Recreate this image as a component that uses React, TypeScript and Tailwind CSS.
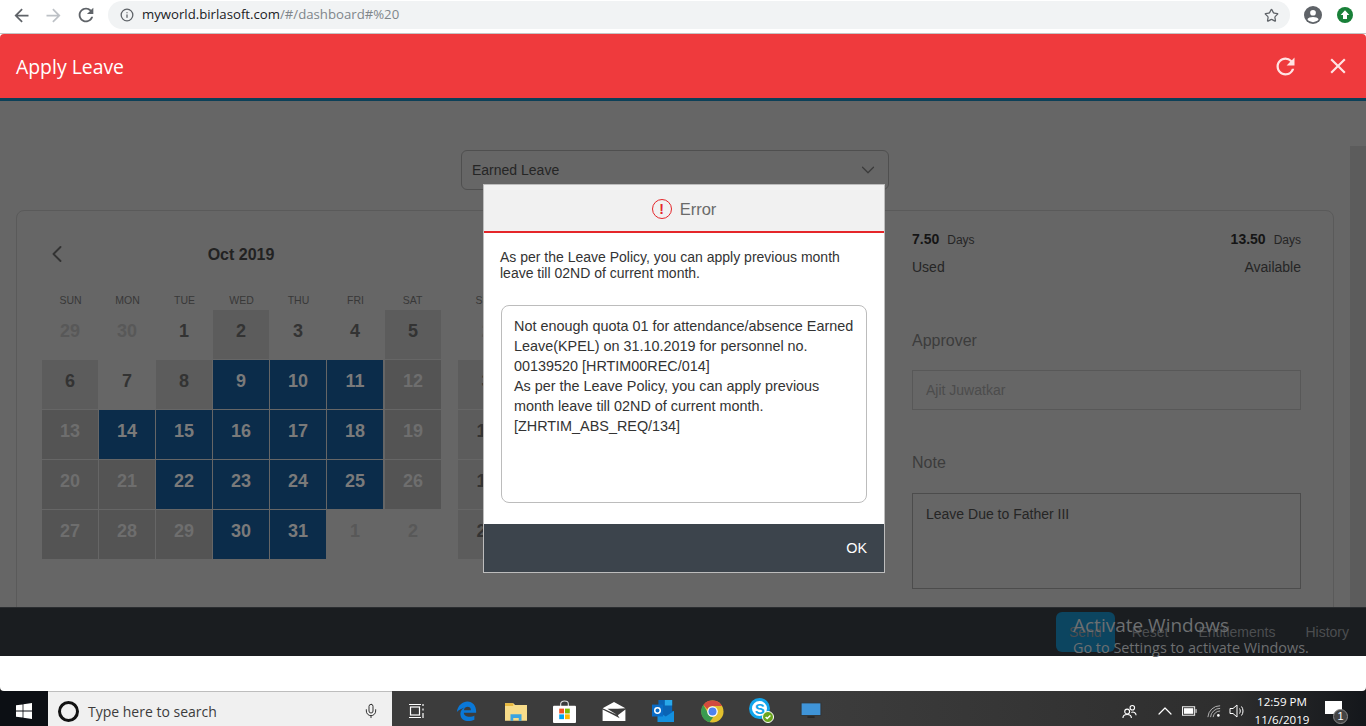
import { Info, Star, ChevronDown, ChevronLeft, Mic, ChevronUp } from "lucide-react";

type Cell = { n: number; bg?: string; fg: string };

const DARK = "text-[#333333]";
const DIM = "text-[#7a7a7a]";
const FADE = "text-[#6e6e6e]";
const OUT = "text-[#585858]";
const BLUE = "bg-[#0b2c4a]";
const MID = "bg-[#5c5c5c]";
const DEEP = "bg-[#545454]";

const weeks: Cell[][] = [
  [
    { n: 29, fg: OUT },
    { n: 30, fg: OUT },
    { n: 1, fg: DARK },
    { n: 2, bg: MID, fg: DARK },
    { n: 3, fg: DARK },
    { n: 4, fg: DARK },
    { n: 5, bg: MID, fg: DARK },
  ],
  [
    { n: 6, bg: MID, fg: DARK },
    { n: 7, fg: DARK },
    { n: 8, bg: MID, fg: DARK },
    { n: 9, bg: BLUE, fg: DIM },
    { n: 10, bg: BLUE, fg: DIM },
    { n: 11, bg: BLUE, fg: DIM },
    { n: 12, bg: DEEP, fg: FADE },
  ],
  [
    { n: 13, bg: DEEP, fg: FADE },
    { n: 14, bg: BLUE, fg: DIM },
    { n: 15, bg: BLUE, fg: DIM },
    { n: 16, bg: BLUE, fg: DIM },
    { n: 17, bg: BLUE, fg: DIM },
    { n: 18, bg: BLUE, fg: DIM },
    { n: 19, bg: DEEP, fg: FADE },
  ],
  [
    { n: 20, bg: DEEP, fg: FADE },
    { n: 21, bg: DEEP, fg: FADE },
    { n: 22, bg: BLUE, fg: DIM },
    { n: 23, bg: BLUE, fg: DIM },
    { n: 24, bg: BLUE, fg: DIM },
    { n: 25, bg: BLUE, fg: DIM },
    { n: 26, bg: DEEP, fg: FADE },
  ],
  [
    { n: 27, bg: DEEP, fg: FADE },
    { n: 28, bg: DEEP, fg: FADE },
    { n: 29, bg: DEEP, fg: FADE },
    { n: 30, bg: BLUE, fg: DIM },
    { n: 31, bg: BLUE, fg: DIM },
    { n: 1, fg: OUT },
    { n: 2, fg: OUT },
  ],
];

const days = ["SUN", "MON", "TUE", "WED", "THU", "FRI", "SAT"];

const nextMonth: Cell[] = [
  { n: 2, fg: OUT },
  { n: 3, bg: MID, fg: DARK },
  { n: 10, bg: MID, fg: DARK },
  { n: 17, bg: MID, fg: DARK },
  { n: 24, bg: MID, fg: DARK },
];

const REFRESH =
  "M17.65 6.35A7.958 7.958 0 0 0 12 4c-4.42 0-7.99 3.58-7.99 8s3.57 8 7.99 8c3.73 0 6.84-2.55 7.73-6h-2.08A5.99 5.99 0 0 1 12 18c-3.31 0-6-2.69-6-6s2.69-6 6-6c1.66 0 3.14.69 4.22 1.78L13 11h7V4l-2.35 2.35z";
const CLOSE =
  "M19 6.41 17.59 5 12 10.59 6.41 5 5 6.41 10.59 12 5 17.59 6.41 19 12 13.41 17.59 19 19 17.59 13.41 12z";
const ARROW_BACK = "M20 11H7.83l5.59-5.59L12 4l-8 8 8 8 1.41-1.41L7.83 13H20v-2z";
const ARROW_FORWARD = "M12 4l-1.41 1.41L16.17 11H4v2h12.17l-5.58 5.59L12 20l8-8z";

function Glyph({ d, className }: { d: string; className: string }) {
  return (
    <svg viewBox="0 0 24 24" className={className} fill="currentColor">
      <path d={d} />
    </svg>
  );
}

function Calendar() {
  return (
    <div className="w-[400px]">
      <div className="relative h-[22px] flex items-center justify-center pt-[2px] pr-[2px]">
        <ChevronLeft className="absolute left-[1px] top-[-3px] w-[28px] h-[28px] text-[#333333]" strokeWidth={1.6} />
        <span className="text-[16px] font-bold text-[#222222] leading-none">Oct 2019</span>
      </div>
      <div className="grid grid-cols-[repeat(7,57px)] mt-[24px] h-[21px]">
        {days.map((d) => (
          <div key={d} className="text-center text-[10.5px] leading-[22px] text-[#383838]">{d}</div>
        ))}
      </div>
      {weeks.map((w, i) => (
        <div key={i} className="grid grid-cols-[repeat(6,57px)_58px] h-[50px]">
          {w.map((c, j) => (
            <div
              key={j}
              className={`${c.bg ?? ""} mr-px mb-px last:ml-px flex items-center justify-center text-[18px] font-bold pb-[7px] ${c.fg}`}
            >
              {c.n}
            </div>
          ))}
        </div>
      ))}
    </div>
  );
}

function NextMonthColumn() {
  return (
    <div className="w-[57px] ml-[16px] mt-[46px]">
      <div className="h-[21px] text-center text-[10.5px] leading-[22px] text-[#383838]">SUN</div>
      {nextMonth.map((c, i) => (
        <div key={i} className={`${c.bg ?? ""} h-[49px] mb-px flex items-center justify-center text-[18px] font-bold pb-[7px] ${c.fg}`}>
          {c.n}
        </div>
      ))}
    </div>
  );
}

function EdgeLogo() {
  return (
    <svg viewBox="0 0 24 24" className="w-[21px] h-[22px]">
      <path d="M1 13C2 5 8 1 13 1c6 0 10 5 10 11v2H9c0 5 8 6 12 3v5c-6 3-16 2-16-7 0-3 2-6 5-7-3 1-7 3-9 5Zm8-2h8c0-5-7-5-8 0Z" fill="#0a78d7" />
    </svg>
  );
}

function FolderLogo() {
  return (
    <svg viewBox="0 0 24 20" className="w-[22px] h-[19px]">
      <path d="M0 1h9l2 2h13v17H0Z" fill="#f7dc8a" />
      <path d="M0 1h9v3H0Z" fill="#e8b93f" />
      <path d="M6 20v-7h12v7h-3v-3H9v3Z" fill="#3ba4e0" />
    </svg>
  );
}

function StoreLogo() {
  return (
    <svg viewBox="0 0 24 24" className="w-[23px] h-[23px]">
      <path d="M8 7V4c0-4 8-4 8 0v3" fill="none" stroke="#ddd" strokeWidth="1.2" />
      <rect x="0" y="6" width="24" height="18" fill="#fff" rx="1" />
      <rect x="6.500" y="9" width="5" height="5" fill="#f25022" />
      <rect x="12.500" y="9" width="5" height="5" fill="#7fba00" />
      <rect x="6.500" y="15" width="5" height="5" fill="#00a4ef" />
      <rect x="12.500" y="15" width="5" height="5" fill="#ffb900" />
    </svg>
  );
}

function MailLogo() {
  return (
    <svg viewBox="0 0 24 20" className="w-[24px] h-[19px]">
      <path d="M0 6.500 12 0l12 6.500-8 .5H5l10 6.500Z" fill="#fff" />
      <path d="M0 8v12h24V8l-8 6 2 3-7-3.500Z" fill="#fff" />
    </svg>
  );
}

function OutlookLogo() {
  return (
    <svg viewBox="0 0 24 24" className="w-[24px] h-[22px]">
      <rect x="7" y="0" width="15" height="13" fill="#0a64b5" />
      <rect x="14" y="0" width="8" height="6" fill="#28a8ea" />
      <path d="M6 12h18v12H6Z" fill="#1490df" />
      <path d="M6 12l9 6 9-6" fill="#0a64b5" />
      <rect x="0" y="5" width="12" height="13" fill="#0a6cc7" />
      <circle cx="6" cy="11.500" r="3" fill="none" stroke="#fff" strokeWidth="1.6" />
    </svg>
  );
}

function ChromeLogo() {
  return (
    <svg viewBox="0 0 24 24" className="w-[23px] h-[23px]">
      <circle cx="12" cy="12" r="11.500" fill="#e2c02e" />
      <path d="M12 .5a11.500 11.500 0 0 1 10 5.700H12a6 6 0 0 0-5.400 3.400L2.400 5A11.500 11.500 0 0 1 12 .5Z" fill="#d24b3e" />
      <path d="M2.400 5l5 8.800a5.600 5.600 0 0 0 5.300 4.200l-3.800 5.100A11.500 11.500 0 0 1 2.400 5Z" fill="#3a9b50" />
      <circle cx="12" cy="12" r="5.500" fill="#fff" />
      <circle cx="12" cy="12" r="4.200" fill="#4e82ee" />
    </svg>
  );
}

function SkypeLogo() {
  return (
    <div className="relative w-[25px] h-[25px] -mt-[1px]">
      <div className="w-[21px] h-[21px] rounded-full border-[3px] border-[#12a5ec] bg-white flex items-center justify-center text-[15px] font-bold text-[#12a5ec] leading-none">
        S
      </div>
      <div className="absolute right-0 bottom-0 w-[12px] h-[12px] rounded-full bg-[#6aa51d] border border-white flex items-center justify-center">
        <svg viewBox="0 0 10 10" className="w-[8px] h-[8px]" fill="none" stroke="#fff" strokeWidth="1.800">
          <path d="M2 5l2 2 4-4" />
        </svg>
      </div>
    </div>
  );
}

function App() {
  return (
    <div className="relative w-[1366px] h-[726px] overflow-hidden bg-white font-['Liberation_Sans',Arial,sans-serif]">
      {/* browser toolbar */}
      <div className="h-[34px] flex items-center bg-white border-b border-[#c4c4c4]">
        <div className="w-[108px] flex items-center pl-[11px] gap-[11px] pb-[3px] shrink-0">
          <Glyph d={ARROW_BACK} className="w-[21px] h-[21px] text-[#5f6368]" />
          <Glyph d={ARROW_FORWARD} className="w-[21px] h-[21px] text-[#bdc1c6]" />
          <Glyph d={REFRESH} className="w-[22px] h-[22px] text-[#5f6368]" />
        </div>
        <div className="w-[1182px] h-[28px] mb-[3px] rounded-full bg-[#f1f3f4] flex items-center pl-[12px] pr-[11px]">
          <Info className="w-[14px] h-[14px] text-[#5f6368]" strokeWidth={2.2} />
          <span className="ml-[8px] text-[13.2px] font-['Open_Sans',sans-serif] text-[#202124]">
            myworld.birlasoft.com<span className="text-[#80868b]">/#/dashboard#%20</span>
          </span>
          <Star className="ml-auto w-[15px] h-[15px] text-[#5f6368]" strokeWidth={2} />
        </div>
        <div className="flex-1 flex items-center pl-[14px] gap-[15px] pb-[3px]">
          <svg viewBox="0 0 24 24" className="w-[18px] h-[18px]">
            <circle cx="12" cy="12" r="12" fill="#5f6368" />
            <circle cx="12" cy="9" r="3.800" fill="#fff" />
            <path d="M4.500 17.500c2-4 13-4 15 0a9 9 0 0 1-15 0Z" fill="#fff" />
          </svg>
          <svg viewBox="0 0 24 24" className="w-[16px] h-[16px]">
            <circle cx="12" cy="12" r="12" fill="#188038" />
            <path d="M12 5l6.500 7H15v6H9v-6H5.500Z" fill="#fff" />
          </svg>
        </div>
      </div>

      {/* app header */}
      <div className="h-[64px] rounded-t-[4px] bg-[#ef3a3d] flex items-center justify-between pl-[16px] pr-[15px]">
        <span className="text-[19.4px] pt-[2px] text-white font-['Open_Sans',sans-serif] leading-none">Apply Leave</span>
        <div className="flex items-center gap-[26px] text-[#ffe3e3]">
          <Glyph d={REFRESH} className="w-[27px] h-[27px]" />
          <Glyph d={CLOSE} className="w-[26px] h-[26px]" />
        </div>
      </div>
      <div className="h-[3px] bg-[#0b4058]" />

      {/* dimmed page */}
      <div className="relative h-[506px] bg-[#666666] overflow-hidden">
        <div className="absolute right-0 top-[45px] w-[16px] bottom-0 bg-[#5c5c5c]" />
        <div className="flex justify-center pt-[49px]">
          <div className="w-[428px] h-[40px] ml-[-16px] rounded-[6px] border border-[#4f4f4f] flex items-center justify-between pl-[10px] pr-[9px] text-[14px] text-[#252525]">
            Earned Leave
            <ChevronDown className="w-[22px] h-[22px] text-[#3a3a3a]" strokeWidth={1.3} />
          </div>
        </div>
        <div className="mx-[16px] mt-[20px] mr-[32px] h-[420px] rounded-[8px] border border-[#5a5a5a] flex pt-[32px] pl-[25px]">
          <Calendar />
          <NextMonthColumn />
          <div className="ml-auto w-[389px] mr-[32px] text-[#252525] mt-[-14px]">
            <div className="flex justify-between">
              <div>
                <div className="text-[12px] leading-[20px]"><b className="text-[14px] text-[#151515]">7.50</b><span className="ml-[8px]">Days</span></div>
                <div className="text-[14px] leading-[20px] mt-[7px]">Used</div>
              </div>
              <div className="text-right">
                <div className="text-[12px] leading-[20px]"><b className="text-[14px] text-[#151515]">13.50</b><span className="ml-[8px]">Days</span></div>
                <div className="text-[14px] leading-[20px] mt-[7px]">Available</div>
              </div>
            </div>
            <div className="text-[16px] leading-[20px] mt-[54px] text-[#3c3c3c]">Approver</div>
            <div className="h-[40px] mt-[19px] border border-[#585858] flex items-center pl-[13px] text-[14px] text-[#4c4c4c]">Ajit Juwatkar</div>
            <div className="text-[16px] leading-[20px] mt-[43px] text-[#3c3c3c]">Note</div>
            <div className="h-[96px] mt-[20px] border border-[#4c4c4c] pl-[13px] pt-[11px] text-[14px] leading-[18px] text-[#252525]">Leave Due to Father III</div>
          </div>
        </div>
      </div>

      {/* app footer */}
      <div className="relative h-[49px] bg-[#1a1d20] border-t border-[#2a2d30] flex items-center justify-end pr-[17px] text-[14px] text-[#4c4e50]">
        <div className="w-[59px] h-[40px] rounded-[6px] bg-[#0c4560] flex items-center justify-center mr-[17px]">Send</div>
        <span>Reset</span>
        <span className="ml-[30px]">Entitlements</span>
        <span className="ml-[30px]">History</span>
        <div className="absolute left-[1073px] top-[4px] text-[#6d6f71] font-['Open_Sans',sans-serif]">
          <div className="text-[19px] leading-[27px]">Activate Windows</div>
          <div className="text-[14.4px] leading-[18px]">Go to Settings to activate Windows.</div>
        </div>
      </div>

      <div className="h-[35px] bg-[#1a1a1a]">
        <div className="h-full bg-white rounded-b-[4px]" />
      </div>

      {/* windows taskbar */}
      <div className="h-[35px] flex items-stretch bg-[linear-gradient(to_right,#3c3c3c_60%,#2e2e2e_90%,#14171b_100%)] text-white">
        <div className="w-[48px] bg-[#0c0f14] flex items-center justify-center pt-[5px]">
          <svg viewBox="0 0 16 16" className="w-[16px] h-[16px]">
            <path d="M0 2.300 6.600 1.400v6.200H0ZM7.400 1.300 16 0v7.600H7.400ZM0 8.400h6.600v6.200L0 13.700ZM7.400 8.400H16V16l-8.600-1.300Z" fill="#fff" />
          </svg>
        </div>
        <div className="w-[344px] bg-[#f0f0f0] border-t border-[#bdbdbd] flex items-center pl-[10px] pr-[13px] pt-[4px]">
          <div className="w-[21px] h-[21px] rounded-full border-[3px] border-[#111111]" />
          <span className="ml-[9px] text-[14px] font-['Open_Sans',sans-serif] text-[#3c3c3c]">Type here to search</span>
          <Mic className="ml-auto w-[16px] h-[18px] text-[#333333]" strokeWidth={1.5} />
        </div>
        <div className="w-[50px] flex items-center justify-center pt-[5px]">
          <svg viewBox="0 0 16 16" className="w-[16px] h-[16px]" fill="none" stroke="#fff" strokeWidth="1.200">
            <rect x="1.500" y="4" width="9" height="8" />
            <path d="M0 1.500h12M0 14.500h12M14 1v2M14 5.500v2M14 10v5" />
          </svg>
        </div>
        <div className="flex items-center pt-[5px]">
          <div className="w-[49.2px] flex justify-center"><EdgeLogo /></div>
          <div className="w-[49.2px] flex justify-center"><FolderLogo /></div>
          <div className="w-[49.2px] flex justify-center"><StoreLogo /></div>
          <div className="w-[49.2px] flex justify-center"><MailLogo /></div>
          <div className="w-[49.2px] flex justify-center"><OutlookLogo /></div>
          <div className="w-[49.2px] flex justify-center"><ChromeLogo /></div>
          <div className="w-[49.2px] flex justify-center"><SkypeLogo /></div>
          <div className="w-[49.2px] flex justify-center">
            <svg viewBox="0 0 24 20" className="w-[22px] h-[18px]">
              <rect x="1" y="1" width="22" height="14" fill="#3f94d8" stroke="#333" />
              <rect x="8" y="16" width="8" height="1.500" fill="#222" />
            </svg>
          </div>
        </div>
        <div className="ml-auto flex items-center pr-[19px] pt-[5px]">
          <svg viewBox="0 0 16 16" className="w-[15px] h-[15px] mr-[16px]" fill="none" stroke="#fff" strokeWidth="1.200">
            <circle cx="5.500" cy="8" r="2.600" />
            <path d="M1 15c0-5 9-5 9 0" />
            <circle cx="11" cy="4" r="2.400" />
            <path d="M10 9c2-1 5 0 5 3" />
          </svg>
          <ChevronUp className="w-[24px] h-[24px] text-white mr-[5px]" strokeWidth={1.2} />
          <svg viewBox="0 0 16 10" className="w-[15px] h-[10px] mr-[10px]" fill="none" stroke="#fff">
            <rect x=".5" y=".5" width="13" height="9" />
            <rect x="2" y="2" width="10" height="6" fill="#fff" stroke="none" />
            <path d="M15 3v4" />
          </svg>
          <svg viewBox="0 0 16 16" className="w-[14px] h-[14px] mr-[8px]" fill="none" stroke="#c4c4c4" strokeWidth="1">
            <path d="M1 15A14 14 0 0 1 15 2M4 15A11 11 0 0 1 15 5M7 15a8 8 0 0 1 8-7" />
            <circle cx="13" cy="13" r="1.500" fill="#fff" stroke="none" />
          </svg>
          <svg viewBox="0 0 16 16" className="w-[16px] h-[16px]" fill="none" stroke="#fff" strokeWidth="1">
            <path d="M1 5.500h3L8 2v12L4 10.500H1Z" />
            <path d="M10.500 5.500c1 1.500 1 3.500 0 5M12.500 3.500c2 2.500 2 6.500 0 9" />
          </svg>
          <div className="w-[66px] ml-[4px] text-center text-[11.6px] leading-[18px] font-['Open_Sans',sans-serif] text-white">
            <div>12:59 PM</div>
            <div>11/6/2019</div>
          </div>
          <div className="relative w-[22px] h-[22px] ml-[10px]">
            <div className="w-[17px] h-[13px] bg-white mt-[1px]" />
            <div className="absolute left-[8px] top-[9px] w-[15px] h-[15px] rounded-full bg-[#444444] border border-[#888888] flex items-center justify-center text-[11px] text-white leading-none">1</div>
          </div>
        </div>
      </div>

      {/* error dialog */}
      <div className="absolute left-[483px] top-[184px] w-[402px] h-[389px] bg-white border border-[#bdbdbd] flex flex-col">
        <div className="h-[48px] shrink-0 bg-[#f1f1f1] border-b-2 border-[#e5262a] flex items-center justify-center gap-[8px] pt-[2px]">
          <div className="w-[20px] h-[20px] rounded-full border-[1.5px] border-[#e5262a] flex items-center justify-center text-[14px] font-bold text-[#e5262a] leading-none">!</div>
          <span className="text-[16.5px] text-[#6a6a6a]">Error</span>
        </div>
        <div className="px-[16px] pt-[16px] text-[14px] leading-[16px] text-[#333333]">
          As per the Leave Policy, you can apply previous month
          <br />
          leave till 02ND of current month.
        </div>
        <div className="mx-[17px] mt-[24px] h-[198px] shrink-0 rounded-[8px] border border-[#bcbcbc] pl-[12px] pr-[10px] pt-[10px] text-[14.4px] leading-[20px] text-[#333333]">
          Not enough quota 01 for attendance/absence Earned Leave(KPEL) on 31.10.2019 for personnel no. 00139520 [HRTIM00REC/014]
          <br />
          As per the Leave Policy, you can apply previous month leave till 02ND of current month. [ZHRTIM_ABS_REQ/134]
        </div>
        <div className="mt-auto h-[48px] bg-[#3c444c] flex items-center justify-end pr-[17px] pt-[2px] text-[14.4px] text-white">OK</div>
      </div>
    </div>
  );
}

export default App;
